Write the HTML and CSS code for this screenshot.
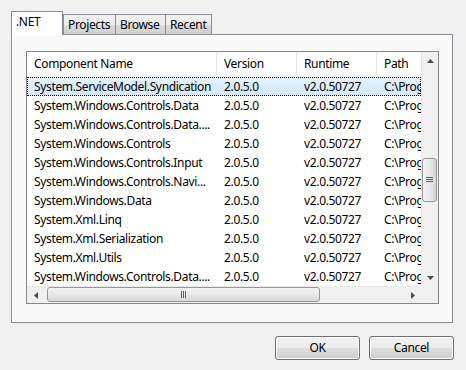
FILE: index.html
```html
<!DOCTYPE html>
<html>
<head>
<meta charset="utf-8">
<link rel="stylesheet" href="styles.css">
</head>
<body>
<div class="dialog">
  <div class="tabs">
    <div class="tab active">.NET</div>
    <div class="tab">Projects</div>
    <div class="tab">Browse</div>
    <div class="tab">Recent</div>
  </div>
  <div class="panel">
    <div class="list">
      <div class="main">
        <div class="content">
          <div class="row header">
            <div class="c c1">Component Name</div>
            <div class="c c2">Version</div>
            <div class="c c3">Runtime</div>
            <div class="c c4">Path</div>
          </div>
          <div class="row sel"><div class="c c1">System.ServiceModel.Syndication</div><div class="c c2">2.0.5.0</div><div class="c c3">v2.0.50727</div><div class="c c4">C:\Prog</div></div>
          <div class="row"><div class="c c1">System.Windows.Controls.Data</div><div class="c c2">2.0.5.0</div><div class="c c3">v2.0.50727</div><div class="c c4">C:\Prog</div></div>
          <div class="row"><div class="c c1">System.Windows.Controls.Data....</div><div class="c c2">2.0.5.0</div><div class="c c3">v2.0.50727</div><div class="c c4">C:\Prog</div></div>
          <div class="row"><div class="c c1">System.Windows.Controls</div><div class="c c2">2.0.5.0</div><div class="c c3">v2.0.50727</div><div class="c c4">C:\Prog</div></div>
          <div class="row"><div class="c c1">System.Windows.Controls.Input</div><div class="c c2">2.0.5.0</div><div class="c c3">v2.0.50727</div><div class="c c4">C:\Prog</div></div>
          <div class="row"><div class="c c1">System.Windows.Controls.Navi...</div><div class="c c2">2.0.5.0</div><div class="c c3">v2.0.50727</div><div class="c c4">C:\Prog</div></div>
          <div class="row"><div class="c c1">System.Windows.Data</div><div class="c c2">2.0.5.0</div><div class="c c3">v2.0.50727</div><div class="c c4">C:\Prog</div></div>
          <div class="row"><div class="c c1">System.Xml.Linq</div><div class="c c2">2.0.5.0</div><div class="c c3">v2.0.50727</div><div class="c c4">C:\Prog</div></div>
          <div class="row"><div class="c c1">System.Xml.Serialization</div><div class="c c2">2.0.5.0</div><div class="c c3">v2.0.50727</div><div class="c c4">C:\Prog</div></div>
          <div class="row"><div class="c c1">System.Xml.Utils</div><div class="c c2">2.0.5.0</div><div class="c c3">v2.0.50727</div><div class="c c4">C:\Prog</div></div>
          <div class="row"><div class="c c1">System.Windows.Controls.Data....</div><div class="c c2">2.0.5.0</div><div class="c c3">v2.0.50727</div><div class="c c4">C:\Prog</div></div>
        </div>
        <div class="vscroll">
          <div class="arrow"><svg width="7" height="4" viewBox="0 0 7 4"><path d="M0 4 L3.5 0 L7 4 Z" fill="#4d4d4d"/></svg></div>
          <div class="vtrack">
            <div class="vthumb"><svg width="7" height="6" viewBox="0 0 7 6"><path d="M0 .5H7M0 2.5H7M0 4.5H7" stroke="#606060" stroke-width="1"/></svg></div>
          </div>
          <div class="arrow"><svg width="7" height="4" viewBox="0 0 7 4"><path d="M0 0 L3.5 4 L7 0 Z" fill="#4d4d4d"/></svg></div>
        </div>
      </div>
      <div class="hrow">
        <div class="hscroll">
          <div class="harrow"><svg width="4" height="7" viewBox="0 0 4 7"><path d="M4 0 L0 3.5 L4 7 Z" fill="#4d4d4d"/></svg></div>
          <div class="htrack">
            <div class="hthumb"><svg width="6" height="7" viewBox="0 0 6 7"><path d="M.5 0V7M2.5 0V7M4.5 0V7" stroke="#606060" stroke-width="1"/></svg></div>
          </div>
          <div class="harrow"><svg width="4" height="7" viewBox="0 0 4 7"><path d="M0 0 L4 3.5 L0 7 Z" fill="#4d4d4d"/></svg></div>
        </div>
        <div class="corner"></div>
      </div>
    </div>
  </div>
  <div class="buttons">
    <div class="btn">OK</div>
    <div class="btn">Cancel</div>
  </div>
</div>
</body>
</html>
```

FILE: styles.css
```css
html, body {
  margin: 0;
  padding: 0;
  background: #f0f0f0;
  font-family: "Noto Sans", "Open Sans", sans-serif;
  font-size: 12px;
  letter-spacing: -0.35px;
  color: #000;
}
.dialog {
  width: 466px;
  height: 370px;
  padding: 11px 0 0 11px;
  box-sizing: border-box;
}
.tabs {
  display: flex;
  align-items: flex-end;
  height: 23px;
  position: relative;
  z-index: 2;
}
.tab {
  height: 19px;
  line-height: 19px;
  padding: 0 4px;
  border: 1px solid #898c95;
  border-bottom: none;
  margin-left: -1px;
  background: linear-gradient(#f2f2f2, #ebebeb 50%, #dddddd 51%, #cfcfcf);
  box-sizing: content-box;
}
.tab:nth-child(2) { margin-left: 0; width: 43px; }
.tab:nth-child(3) { width: 41px; }
.tab:nth-child(4) { width: 37px; }
.tab.active {
  margin-left: 0;
  width: 42px;
  height: 23px;
  line-height: 20px;
  background: #ffffff;
  margin-bottom: -1px;
  padding: 0 4px;
}
.panel {
  width: 442px;
  height: 289px;
  box-sizing: border-box;
  border: 1px solid #898c95;
  background: #f9f9f9;
  padding: 16px 0 0 14px;
  box-shadow: inset 1px 1px 0 #fff;
}
.list {
  width: 413px;
  height: 253px;
  box-sizing: border-box;
  border: 1px solid #828790;
  background: #fff;
  display: flex;
  flex-direction: column;
}
.main {
  flex: 1;
  display: flex;
  overflow: hidden;
}
.content {
  width: 394px;
  overflow: hidden;
}
.row {
  display: flex;
  height: 19px;
  line-height: 19px;
  white-space: nowrap;
}
.row.header {
  height: 24px;
  line-height: 24px;
  margin-bottom: 1px;
  background: #fff;
}
.row.header .c { border-right: 1px solid #e3e6ea; }
.row.sel {
  background: linear-gradient(#e6f3fc, #d1e8fa);
  outline: 1px dotted #000;
  outline-offset: -1px;
}
.c {
  overflow: hidden;
  padding-left: 7px;
  box-sizing: border-box;
  flex: none;
}
.c1 { width: 190px; }
.c2 { width: 80px; }
.c3 { width: 80px; }
.c4 { width: 60px; }
.vscroll {
  width: 17px;
  display: flex;
  flex-direction: column;
  background: #f0f0f0;
  border-left: 1px solid #e8e8e8;
  box-sizing: border-box;
}
.arrow {
  height: 17px;
  display: flex;
  align-items: center;
  justify-content: center;
}
.vtrack {
  flex: 1;
  padding-top: 89px;
}
.vthumb {
  width: 15px;
  height: 44px;
  box-sizing: border-box;
  border: 1px solid #979797;
  border-radius: 3px;
  background: linear-gradient(90deg, #f3f3f3, #e8e8e8 50%, #d6d6d6);
  display: flex;
  align-items: center;
  justify-content: center;
}
.hrow {
  display: flex;
  height: 17px;
}
.hscroll {
  width: 394px;
  display: flex;
  background: #f0f0f0;
  border-top: 1px solid #e8e8e8;
  box-sizing: border-box;
}
.harrow {
  width: 17px;
  display: flex;
  align-items: center;
  justify-content: center;
}
.htrack {
  flex: 1;
  padding-left: 3px;
}
.hthumb {
  width: 273px;
  height: 15px;
  box-sizing: border-box;
  border: 1px solid #979797;
  border-radius: 3px;
  background: linear-gradient(#f3f3f3, #e8e8e8 50%, #d6d6d6);
  display: flex;
  align-items: center;
  justify-content: center;
}
.corner {
  flex: 1;
  background: #f0f0f0;
}
.buttons {
  display: flex;
  justify-content: flex-end;
  gap: 9px;
  margin-top: 13px;
  padding-right: 12px;
}
.btn {
  width: 85px;
  height: 24px;
  box-sizing: border-box;
  border: 1px solid #707070;
  border-radius: 3px;
  background: linear-gradient(#f2f2f2, #ebebeb 50%, #dddddd 51%, #cfcfcf);
  box-shadow: inset 0 0 0 1px #fcfcfc;
  text-align: center;
  line-height: 22px;
}
```
